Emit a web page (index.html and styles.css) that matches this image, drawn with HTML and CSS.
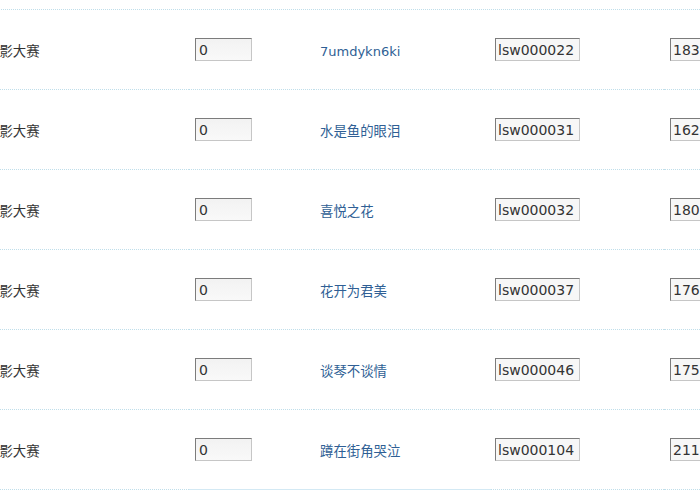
FILE: index.html
```html
<!DOCTYPE html>
<html lang="zh">
<head>
<meta charset="utf-8">
<link rel="stylesheet" href="styles.css">
</head>
<body>
<div class="wrap">
  <div class="top-row"></div>
  <table class="list">
    <colgroup>
      <col class="w1"><col class="w2"><col class="w3"><col class="w4"><col class="w5">
    </colgroup>
    <tbody>
      <tr>
        <td class="c1">摄影大赛</td>
        <td class="c2"><input class="num" value="0"></td>
        <td class="c3"><a href="#" class="latin">7umdykn6ki</a></td>
        <td class="c4"><input class="code" value="lsw000022"></td>
        <td class="c5"><input class="phone" value="18300000000"></td>
      </tr>
      <tr>
        <td class="c1">摄影大赛</td>
        <td class="c2"><input class="num" value="0"></td>
        <td class="c3"><a href="#">水是鱼的眼泪</a></td>
        <td class="c4"><input class="code" value="lsw000031"></td>
        <td class="c5"><input class="phone" value="16200000000"></td>
      </tr>
      <tr>
        <td class="c1">摄影大赛</td>
        <td class="c2"><input class="num" value="0"></td>
        <td class="c3"><a href="#">喜悦之花</a></td>
        <td class="c4"><input class="code" value="lsw000032"></td>
        <td class="c5"><input class="phone" value="18000000000"></td>
      </tr>
      <tr>
        <td class="c1">摄影大赛</td>
        <td class="c2"><input class="num" value="0"></td>
        <td class="c3"><a href="#">花开为君美</a></td>
        <td class="c4"><input class="code" value="lsw000037"></td>
        <td class="c5"><input class="phone" value="17600000000"></td>
      </tr>
      <tr>
        <td class="c1">摄影大赛</td>
        <td class="c2"><input class="num" value="0"></td>
        <td class="c3"><a href="#">谈琴不谈情</a></td>
        <td class="c4"><input class="code" value="lsw000046"></td>
        <td class="c5"><input class="phone" value="17500000000"></td>
      </tr>
      <tr class="last">
        <td class="c1">摄影大赛</td>
        <td class="c2"><input class="num" value="0"></td>
        <td class="c3"><a href="#">蹲在街角哭泣</a></td>
        <td class="c4"><input class="code" value="lsw000104"></td>
        <td class="c5"><input class="phone" value="21100000000"></td>
      </tr>
    </tbody>
  </table>
</div>
</body>
</html>
```

FILE: styles.css
```css
html, body {
  margin: 0;
  padding: 0;
  background: #ffffff;
  overflow: hidden;
}
.wrap {
  width: 700px;
  height: 490px;
  overflow: hidden;
}
.top-row {
  height: 9px;
  margin-left: -20px;
  width: 760px;
  border-bottom: 1px dotted #bfdeea;
}
.list {
  border-collapse: collapse;
  table-layout: fixed;
  width: 860px;
  margin-left: -20px;
}
.w1 { width: 209px; }
.w2 { width: 125px; }
.w3 { width: 177px; }
.w4 { width: 173px; }
.w5 { width: 176px; }
.list td {
  height: 79px;
  padding: 0 0 0 6px;
  border-bottom: 1px dotted #bfdeea;
  vertical-align: middle;
  font-family: "Noto Sans CJK SC", "DejaVu Sans", sans-serif;
  font-size: 13.4px;
  color: #333333;
  white-space: nowrap;
}
.list td.c4 { padding-left: 4px; }
.list tr.last td.c2,
.list tr.last td.c3 {
  border-bottom: 1px solid #d3e9f4;
}
.c3 a {
  color: #2f5f95;
  text-decoration: none;
  font-family: "Noto Sans CJK SC", "DejaVu Sans", sans-serif;
  font-size: 13.4px;
}
.c3 a.latin {
  font-family: "DejaVu Sans", sans-serif;
  font-size: 13px;
}
input {
  box-sizing: border-box;
  height: 23px;
  margin: 0;
  padding: 0 0 0 3px;
  font-family: "DejaVu Sans", sans-serif;
  font-size: 14px;
  color: #333333;
  border-style: solid;
  border-width: 1px;
  border-color: #7c7c7c #c6c6c6 #c6c6c6 #7c7c7c;
  background: #f7f7f7;
  outline: none;
  vertical-align: middle;
}
input.num {
  width: 57px;
  background: linear-gradient(#f2f2f2, #f9f9f9);
}
input.code {
  width: 85px;
  padding-left: 2px;
}
input.phone {
  width: 100px;
  padding-left: 2px;
}
```
